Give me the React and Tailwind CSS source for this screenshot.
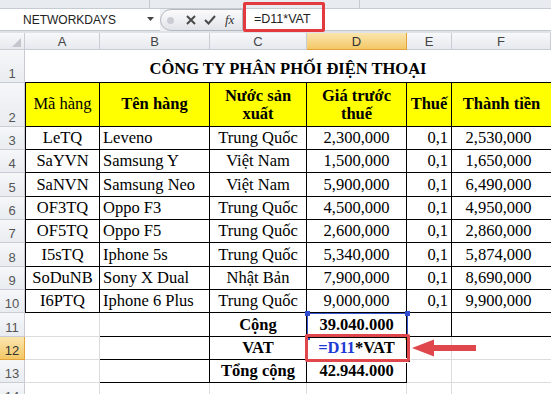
import React from 'react';

const GRID = 'grid grid-cols-[25px_75px_110px_97px_100px_45px_99px]';
const SERIF = "font-['Liberation_Serif','Times_New_Roman',serif]";
const SANS = "font-['Liberation_Sans',Arial,sans-serif]";

const items = [
  ['LeTQ', 'Leveno', 'Trung Quốc', '2,300,000', '0,1', '2,530,000'],
  ['SaYVN', 'Samsung Y', 'Việt Nam', '1,500,000', '0,1', '1,650,000'],
  ['SaNVN', 'Samsung Neo', 'Việt Nam', '5,900,000', '0,1', '6,490,000'],
  ['OF3TQ', 'Oppo F3', 'Trung Quốc', '4,500,000', '0,1', '4,950,000'],
  ['OF5TQ', 'Oppo F5', 'Trung Quốc', '2,600,000', '0,1', '2,860,000'],
  ['I5sTQ', 'Iphone 5s', 'Trung Quốc', '5,340,000', '0,1', '5,874,000'],
  ['SoDuNB', 'Sony X Dual', 'Nhật Bản', '7,900,000', '0,1', '8,690,000'],
  ['I6PTQ', 'Iphone 6 Plus', 'Trung Quốc', '9,000,000', '0,1', '9,900,000'],
];

const heights = ['h-[23px]', 'h-[23px]', 'h-[24px]', 'h-[23px]', 'h-[23px]', 'h-[24px]', 'h-[23px]', 'h-[23px]'];

// column alignment, same as the sheet
const align = [
  'justify-center border-l',
  'justify-start pl-[3px]',
  'justify-center',
  'justify-center',
  'justify-end pr-[3px]',
  'justify-center pr-[6px]',
];

const RowHead = ({ n, active }) => (
  <div
    className={`flex items-end justify-center pb-[2px] border-r border-b text-[13px] leading-none ${SANS} ${
      active
        ? 'bg-linear-to-b from-[#fbe6ae] to-[#f3c764] border-[#e2a23c] text-[#333]'
        : 'bg-linear-to-b from-[#f5f7f9] to-[#e9ecf0] border-[#c9cdd3] text-[#555]'
    }`}
  >
    {n}
  </div>
);

const ColHead = ({ label, active }) => (
  <div
    className={`flex items-center justify-center border-r border-b text-[13px] leading-none ${SANS} ${
      active
        ? 'bg-linear-to-b from-[#fbe6ae] to-[#f3c764] border-[#e2a23c] text-[#333]'
        : 'bg-linear-to-b from-[#f7f8fa] to-[#e6e9ee] border-[#c9cdd3] text-[#444]'
    }`}
  >
    {label}
  </div>
);

const FormulaBar = () => (
  <div className={`${SANS}`}>
    <div className="flex h-[9px] bg-[#e8ecf1] border-b border-[#c6cbd2]">
      <div className="w-[150px] border-r border-[#c6cbd2]" />
      <div className="w-[210px] border-r border-[#c6cbd2]" />
    </div>
    <div className="flex h-[22px] bg-[#eef0f3]">
      <div className="flex w-[160px] items-center bg-white border-b border-[#c3c8cf]">
        <span className="flex-1 pl-[23px] text-[12px] text-[#222]">NETWORKDAYS</span>
        <svg width="8" height="5" viewBox="0 0 8 5" className="mr-[5px]">
          <path d="M0 0h7L3.5 4z" fill="#444" />
        </svg>
      </div>
      <div className="flex w-[83px] items-center rounded-l-full border border-[#b4b9c1] bg-linear-to-b from-[#fbfbfc] to-[#e1e4e8]">
        <div className="ml-[6px] h-[7px] w-[7px] rounded-full bg-[#c9cdd3]" />
        <svg width="10" height="10" viewBox="0 0 10 10" className="ml-[12px]">
          <path d="M1 1l8 8M9 1l-8 8" stroke="#4a4a4a" strokeWidth="2" />
        </svg>
        <svg width="12" height="10" viewBox="0 0 12 10" className="ml-[8px]">
          <path d="M1 5l3.5 3.5L11 1" stroke="#4a4a4a" strokeWidth="2" fill="none" />
        </svg>
        <span className={`ml-[9px] text-[13px] italic text-[#333] ${SERIF}`}>fx</span>
      </div>
      <div className="flex flex-1 items-center bg-white border-b border-l border-[#c3c8cf] pl-[10px] text-[12.5px] text-[#222]">
        =D11*VAT
      </div>
    </div>
    <div className="h-[2px] bg-[#dfe3e8]" />
  </div>
);

export default function App() {
  return (
    <div className="relative h-[394px] w-[551px] overflow-hidden bg-white">
      <FormulaBar />

      {/* column headers */}
      <div className={`${GRID} h-[17px]`}>
        <div className="relative border-r border-b border-[#c9cdd3] bg-linear-to-b from-[#f7f8fa] to-[#e6e9ee]">
          <svg width="9" height="9" viewBox="0 0 9 9" className="absolute right-[3px] bottom-[2px]">
            <path d="M9 0v9H0z" fill="#c3c7cd" />
          </svg>
        </div>
        {['A', 'B', 'C', 'D', 'E', 'F'].map((c) => (
          <ColHead key={c} label={c} active={c === 'D'} />
        ))}
      </div>

      <div className={`${SERIF} text-[16.5px] text-black`}>
        {/* row 1 title */}
        <div className={`${GRID} h-[33px]`}>
          <RowHead n={1} />
          <div className="col-span-6 flex items-end justify-center pb-[3px] border-b border-black font-bold leading-[20px]">
            CÔNG TY PHÂN PHỐI ĐIỆN THOẠI
          </div>
        </div>

        {/* row 2 header */}
        <div className={`${GRID} h-[44px] bg-transparent`}>
          <RowHead n={2} />
          <div className="flex items-center justify-center border-l border-r border-b border-black bg-[#ffff00]">Mã hàng</div>
          <div className="flex items-center justify-center border-r border-b border-black bg-[#ffff00] font-bold">Tên hàng</div>
          <div className="flex flex-col items-center justify-center border-r border-b border-black bg-[#ffff00] font-bold leading-[18px]">
            <span>Nước sản</span>
            <span>xuất</span>
          </div>
          <div className="flex flex-col items-center justify-center border-r border-b border-black bg-[#ffff00] font-bold leading-[18px]">
            <span>Giá trước</span>
            <span>thuế</span>
          </div>
          <div className="flex items-center justify-center border-r border-b border-black bg-[#ffff00] font-bold">Thuế</div>
          <div className="flex items-center justify-center border-b border-black bg-[#ffff00] font-bold">Thành tiền</div>
        </div>

        {/* rows 3-10 */}
        {items.map((row, i) => (
          <div key={row[0]} className={`${GRID} ${heights[i]}`}>
            <RowHead n={i + 3} />
            {row.map((v, j) => (
              <div
                key={j}
                className={`flex items-end pb-[1px] leading-[20px] whitespace-nowrap border-b border-black ${j < 5 ? 'border-r' : ''} ${align[j]}`}
              >
                {v}
              </div>
            ))}
          </div>
        ))}

        {/* row 11 */}
        <div className={`${GRID} h-[24px]`}>
          <RowHead n={11} />
          <div className="border-r border-b border-[#dadcdd]" />
          <div className="border-r border-b border-black" />
          <div className="flex items-end justify-center pb-[1px] leading-[20px] border-r border-b border-black font-bold">Cộng</div>
          <div className="flex items-end justify-center pb-[1px] leading-[20px] border-r border-b border-black font-bold">39.040.000</div>
          <div className="border-r border-b border-black" />
          <div className="border-b border-black" />
        </div>

        {/* row 12 */}
        <div className={`${GRID} h-[23px]`}>
          <RowHead n={12} active />
          <div className="border-r border-b border-[#dadcdd]" />
          <div className="border-r border-b border-black" />
          <div className="flex items-end justify-center pb-[1px] leading-[20px] border-r border-b border-black font-bold">VAT</div>
          <div className="flex items-end justify-center pb-[1px] leading-[20px] border-r border-b border-black font-bold">
            <span className="text-[#1d3bd6]">=D11</span>*VAT
          </div>
          <div className="border-r border-b border-[#dadcdd]" />
          <div className="border-b border-[#dadcdd]" />
        </div>

        {/* row 13 */}
        <div className={`${GRID} h-[23px]`}>
          <RowHead n={13} />
          <div className="border-r border-b border-[#dadcdd]" />
          <div className="border-r border-b border-black" />
          <div className="flex items-end justify-center pb-[1px] leading-[20px] border-r border-b border-black font-bold">Tổng cộng</div>
          <div className="flex items-end justify-center pb-[1px] leading-[20px] border-r border-b border-black font-bold">42.944.000</div>
          <div className="border-r border-b border-[#dadcdd]" />
          <div className="border-b border-[#dadcdd]" />
        </div>

        {/* row 14 */}
        <div className={`${GRID} h-[23px]`}>
          <RowHead n={14} />
          <div className="border-r border-b border-[#dadcdd]" />
          <div className="border-r border-b border-[#dadcdd]" />
          <div className="border-r border-b border-[#dadcdd]" />
          <div className="border-r border-b border-[#dadcdd]" />
          <div className="border-r border-b border-[#dadcdd]" />
          <div className="border-b border-[#dadcdd]" />
        </div>
      </div>

      {/* red box round the formula bar text */}
      <div className="absolute left-[243px] top-[2px] h-[30px] w-[82px] rounded-[2px] border-[3px] border-[#e23a3f]" />

      {/* D11 reference highlight */}
      <div className="absolute left-[307px] top-[313px] h-[25px] w-[101px] border border-[#3a55d2]" />
      <div className="absolute left-[305px] top-[311px] h-[5px] w-[5px] bg-[#2f4bd0]" />
      <div className="absolute left-[405px] top-[311px] h-[5px] w-[5px] bg-[#2f4bd0]" />
      <div className="absolute left-[305px] top-[335px] h-[5px] w-[5px] bg-[#2f4bd0]" />
      <div className="absolute left-[405px] top-[335px] h-[5px] w-[5px] bg-[#e7c64a]" />

      {/* active cell D12 + annotation */}
      <div className="absolute left-[306px] top-[336px] h-[25px] w-[102px] border-2 border-black" />
      <div className="absolute left-[406px] top-[358px] h-[5px] w-[5px] border border-white bg-black" />
      <div className="absolute left-[305px] top-[334px] h-[28px] w-[105px] rounded-[2px] border-[3px] border-[#e0474c]" />

      <svg width="68" height="22" viewBox="0 0 68 22" className="absolute left-[410px] top-[337px]">
        <path d="M2 11L24 2.5V8H66V14H24V19.5Z" fill="#e0474c" />
      </svg>
    </div>
  );
}
